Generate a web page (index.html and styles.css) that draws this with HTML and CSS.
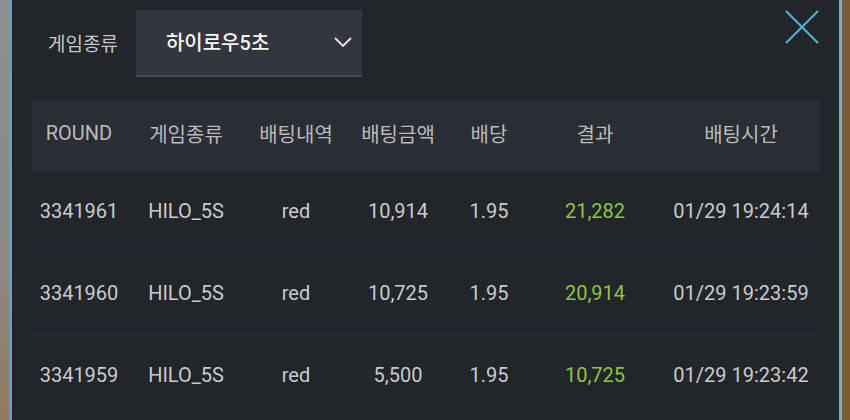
FILE: index.html
```html
<!DOCTYPE html>
<html lang="ko">

<head>
    <meta charset="UTF-8">
    <meta name="viewport" content="width=device-width, initial-scale=1.0">
    <title>배팅내역</title>

    <link rel="stylesheet" href="styles.css">
</head>

<body>

    <div class="edge edge-left"></div>

    <div class="panel">

        <!-- filter bar -->
        <div class="toolbar">
            <span class="label">게임종류</span>
            <div class="select">
                <span>하이로우5초</span>
                <svg width="18" height="10" viewBox="0 0 18 10">
                    <path d="M1 1 L9 9 L17 1" fill="none" stroke="#e6e6e6" stroke-width="1.8" />
                </svg>
            </div>
            <svg class="close" width="34" height="34" viewBox="0 0 34 34">
                <path d="M1 1 L33 33 M33 1 L1 33" stroke="#4fb3cf" stroke-width="2.2" />
            </svg>
        </div>

        <!-- history table -->
        <div class="table">
            <div class="row head">
                <div>ROUND</div>
                <div>게임종류</div>
                <div>배팅내역</div>
                <div>배팅금액</div>
                <div>배당</div>
                <div>결과</div>
                <div>배팅시간</div>
            </div>
            <div class="row">
                <div>3341961</div>
                <div>HILO_5S</div>
                <div>red</div>
                <div>10,914</div>
                <div>1.95</div>
                <div class="win">21,282</div>
                <div>01/29 19:24:14</div>
            </div>
            <div class="row">
                <div>3341960</div>
                <div>HILO_5S</div>
                <div>red</div>
                <div>10,725</div>
                <div>1.95</div>
                <div class="win">20,914</div>
                <div>01/29 19:23:59</div>
            </div>
            <div class="row">
                <div>3341959</div>
                <div>HILO_5S</div>
                <div>red</div>
                <div>5,500</div>
                <div>1.95</div>
                <div class="win">10,725</div>
                <div>01/29 19:23:42</div>
            </div>
        </div>

    </div>

    <div class="edge edge-right"></div>

</body>

</html>
```

FILE: styles.css
```css
body {
    margin: 0;
    height: 420px;
    overflow: hidden;
    display: flex;
    background: #23262b;
    font-family: Roboto, "Noto Sans CJK KR", sans-serif;
}

/* strips of the page behind the popup */
.edge-left {
    width: 9px;
    background: linear-gradient(#8e8e8e, #8d8a84 60%, #8f7a5f);
}

.edge-right {
    width: 8px;
    background: linear-gradient(#7b5a36, #7e5a30);
}

.panel {
    width: 827px;
    background: #22252a;
    border-left: 3px solid #5ea6b6;
    border-right: 3px solid #6fb0ba;
    box-sizing: content-box;
}

/* filter bar */
.toolbar {
    height: 100px;
    display: flex;
    align-items: flex-start;
    padding: 0 20px 0 36px;
}

.label {
    margin-top: 29px;
    font-size: 19px;
    color: #c4c6c9;
    font-family: "Noto Sans CJK KR", sans-serif;
    line-height: 28px;
}

.select {
    margin: 10px 0 0 18px;
    width: 226px;
    height: 67px;
    box-sizing: border-box;
    padding: 0 10px 2px 30px;
    display: flex;
    align-items: center;
    justify-content: space-between;
    background: #33363c;
    border-bottom: 2px solid #4a4d53;
    color: #f4f4f4;
    font-size: 20px;
    font-weight: 500;
    font-family: Roboto, "Noto Sans CJK KR", sans-serif;
}

.close {
    margin: 10px 0 0 auto;
}

/* table */
.table {
    padding: 0 19px 0 20px;
}

.row {
    display: grid;
    grid-template-columns: 94px 120px 100px 104px 78px 134px 1fr;
    align-items: center;
    height: 82px;
    box-sizing: border-box;
    padding-bottom: 4px;
    border-bottom: 1px solid #2a2d33;
    color: #c9cbce;
    font-size: 20px;
    text-align: center;
}

.row.head {
    height: 72px;
    padding-bottom: 6px;
    background: #2a2d33;
    border-radius: 4px;
    border-bottom: none;
    color: #b9bbbf;
    font-size: 20px;
}

.row:last-child {
    border-bottom: none;
}

.win {
    color: #8fc443;
}
```
